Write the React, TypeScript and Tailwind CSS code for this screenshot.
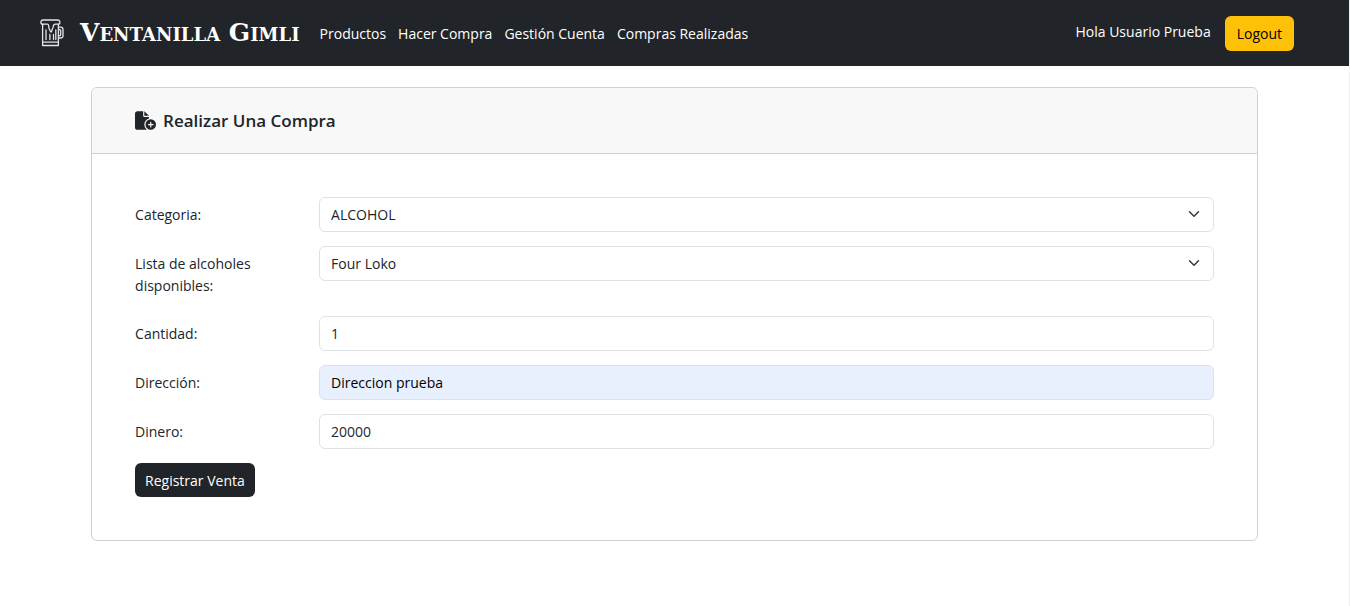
import type { ReactNode } from 'react';
import { FaFileCirclePlus } from 'react-icons/fa6';

const links = ['Productos', 'Hacer Compra', 'Gestión Cuenta', 'Compras Realizadas'];

const control =
  'block h-[35px] w-full appearance-none rounded-md border border-[#dee2e6] px-[11px] text-[14px] text-[#212529] outline-none focus:border-[#86b7fe]';

function BeerIcon() {
  return (
    <svg width="24" height="28" viewBox="0 0 24 28" fill="none" stroke="#e4e5e6" strokeWidth="1.3" strokeLinecap="round" strokeLinejoin="round" aria-hidden="true">
      <path d="M3 5.500C.2 5.200 .2 1 3 1H17.500C20.200 1 20.800 4.500 18.500 5.500" />
      <path d="M2.600 5.200H7.500C9 5.200 8.600 7 8.900 9c.2 1.300 1 1.300 1.200 2.700.3 1.700 1.500 1.700 1.700 0 .2-2 1.300-2.400 1.500-4.200.2-1.600.7-2.300 2.200-2.300h3" />
      <path d="M2.600 5.500V26.500H18.400V5.500M2.600 23.200H18.400" />
      <path d="M6 11v9.500M9.900 15.500v5M13.500 15.500v5M15.800 11v9.500" />
      <path d="M18.500 8.200h2.200c1.500 0 2.300.8 2.300 2.300v6c0 1.700-.8 2.500-2.300 2.500h-2.200M18.500 10.600h1.300c.6 0 .9.3.9.9v4.300c0 .6-.3.900-.9.900h-1.300" />
    </svg>
  );
}

function Row({ id, label, children }: { id: string; label: string; children: ReactNode }) {
  return (
    <div className="grid grid-cols-[184px_1fr]">
      <label htmlFor={id} className="self-start pt-[7px] pr-[22px] leading-[22px]">
        {label}
      </label>
      <div>{children}</div>
    </div>
  );
}

function Select({ id, options }: { id: string; options: string[] }) {
  return (
    <div className="relative">
      <select id={id} className={`${control} bg-white`}>
        {options.map((option) => (
          <option key={option}>{option}</option>
        ))}
      </select>
      <svg className="pointer-events-none absolute top-[11px] right-[14px]" width="12" height="12" viewBox="0 0 16 16" fill="none" stroke="#343a40" strokeWidth="2" strokeLinecap="round" strokeLinejoin="round" aria-hidden="true">
        <path d="m2 5 6 6 6-6" />
      </svg>
    </div>
  );
}

export default function App() {
  return (
    <div className="min-h-screen border-r border-[#f0f0f0] bg-white font-['Open_Sans','Noto_Sans',sans-serif] text-[14px] text-[#212529]">
      <header className="flex h-[66px] items-center bg-[#212529] pr-[55px] pl-10 text-white">
        <a href="#" className="flex items-center gap-4">
          <BeerIcon />
          <span className="font-['DejaVu_Serif',serif] text-[25px] leading-8 font-bold whitespace-nowrap [font-variant:small-caps]">
            Ventanilla Gimli
          </span>
        </a>
        <nav className="ml-5 flex gap-3 whitespace-nowrap">
          {links.map((link) => (
            <a key={link} href="#">
              {link}
            </a>
          ))}
        </nav>
        <div className="ml-auto flex items-center gap-[14px] whitespace-nowrap">
          <span className="pb-[3px]">Hola Usuario Prueba</span>
          <button type="button" className="h-[35px] rounded-md bg-[#ffc107] px-3 text-black">
            Logout
          </button>
        </div>
      </header>

      <main className="mx-auto mt-[21px] w-[86.5%] rounded-md border border-[#d0d1d2]">
        <div className="flex h-[66px] items-center gap-[7px] rounded-t-md border-b border-[#d0d1d2] bg-[#f8f8f8] px-[43px]">
          <FaFileCirclePlus size={21} aria-hidden="true" />
          <h1 className="text-[17px] leading-6 font-semibold">Realizar Una Compra</h1>
        </div>
        <form className="flex flex-col gap-[14px] p-[43px]" onSubmit={(event) => event.preventDefault()}>
          <Row id="categoria" label="Categoria:">
            <Select id="categoria" options={['ALCOHOL']} />
          </Row>
          <div className="pb-[5px]">
            <Row id="producto" label="Lista de alcoholes disponibles:">
              <Select id="producto" options={['Four Loko']} />
            </Row>
          </div>
          <Row id="cantidad" label="Cantidad:">
            <input id="cantidad" type="text" inputMode="numeric" defaultValue="1" className={`${control} bg-white`} />
          </Row>
          <Row id="direccion" label="Dirección:">
            <input id="direccion" type="text" defaultValue="Direccion prueba" className={`${control} bg-[#e8f0fe] text-black`} />
          </Row>
          <Row id="dinero" label="Dinero:">
            <input id="dinero" type="text" inputMode="numeric" defaultValue="20000" className={`${control} bg-white`} />
          </Row>
          <button type="submit" className="h-[34px] self-start rounded-md bg-[#212529] px-[10px] text-white">
            Registrar Venta
          </button>
        </form>
      </main>
    </div>
  );
}
